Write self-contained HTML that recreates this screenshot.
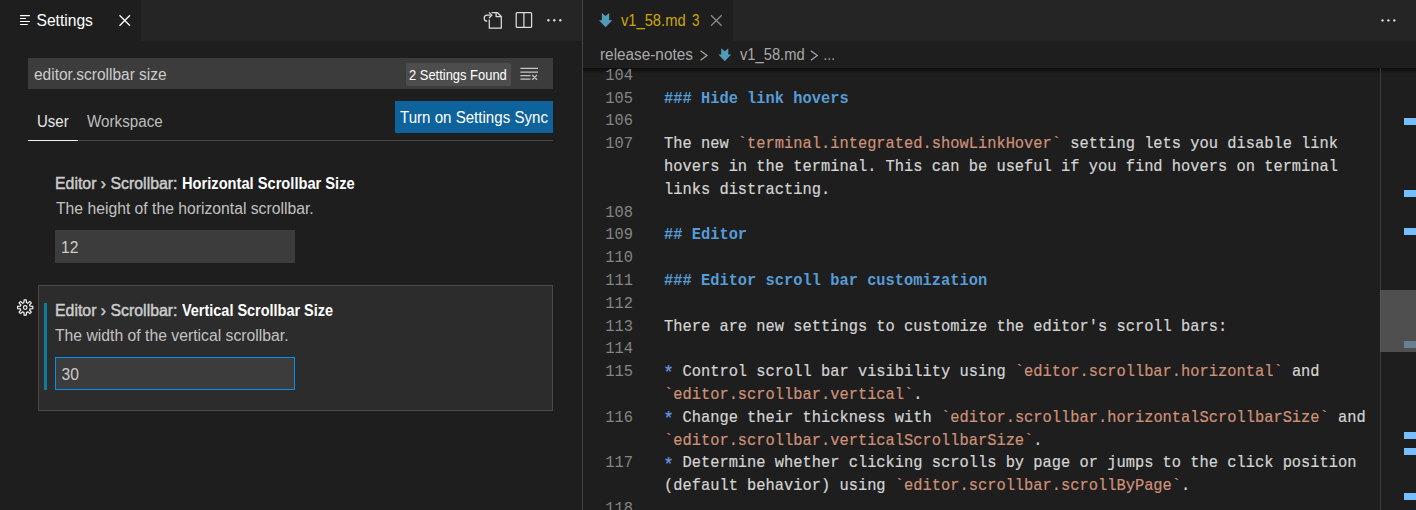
<!DOCTYPE html>
<html><head><meta charset="utf-8">
<style>
html,body{margin:0;padding:0}
body{width:1416px;height:510px;overflow:hidden;background:#1e1e1e;position:relative;font-family:'Liberation Sans',sans-serif}
.a{position:absolute}
.t{position:absolute;white-space:pre;line-height:normal;font-family:'Liberation Sans',sans-serif;transform-origin:0 0}
.ln{position:absolute;left:596px;width:37px;text-align:right;transform-origin:100% 0;white-space:pre;font-family:'Liberation Mono',monospace;font-size:15.4px;line-height:normal;color:#858585}
.cl{position:absolute;left:663.5px;transform-origin:0 0;white-space:pre;font-family:"Liberation Mono",monospace;font-size:15.4px;line-height:normal;color:#d4d4d4;-webkit-text-stroke:0.2px currentColor}
.mk{position:absolute;left:1404px;width:12px;height:7px;background:#75beff}
svg{position:absolute;overflow:visible}
</style></head><body>
<!-- LEFT GROUP -->
<div class="a" style="left:0;top:0;width:582px;height:41px;background:#252526"></div>
<div class="a" style="left:0;top:0;width:141px;height:41px;background:#1e1e1e"></div>
<!-- divider -->
<div class="a" style="left:582px;top:0;width:1px;height:510px;background:#444444"></div>
<!-- RIGHT GROUP tab bar -->
<div class="a" style="left:583px;top:0;width:833px;height:41px;background:#252526"></div>
<div class="a" style="left:583px;top:0;width:150px;height:41px;background:#1e1e1e"></div>
<!-- search box -->
<div class="a" style="left:28px;top:58px;width:525px;height:31px;background:#3c3c3c"></div>
<div class="a" style="left:406px;top:63px;width:105px;height:23px;background:#4d4d4d;border-radius:2px"></div>
<!-- sync button -->
<div class="a" style="left:395px;top:101px;width:158px;height:32px;background:#0e639c"></div>
<!-- tabs line -->
<div class="a" style="left:28px;top:140px;width:525px;height:1px;background:#454545"></div>
<div class="a" style="left:28px;top:139.5px;width:50px;height:1.5px;background:#f2f2f2"></div>
<!-- input 1 -->
<div class="a" style="left:55px;top:230px;width:240px;height:33px;background:#3c3c3c"></div>
<!-- focused row -->
<div class="a" style="left:38px;top:285px;width:515px;height:126px;box-sizing:border-box;background:#2c2c2c;border:1px solid #4a4a4a"></div>
<div class="a" style="left:44px;top:303px;width:3px;height:87px;background:#0c7d9d"></div>
<div class="a" style="left:55px;top:357px;width:240px;height:33px;box-sizing:border-box;background:#3c3c3c;border:1px solid #0090f1"></div>
<!-- breadcrumb shadow -->
<div class="a" style="left:583px;top:68px;width:833px;height:6px;background:linear-gradient(rgba(0,0,0,0.55),rgba(0,0,0,0))"></div>
<!-- overview ruler -->
<div class="a" style="left:1380px;top:68px;width:1px;height:442px;background:#3b3b3b"></div>
<div class="mk" style="top:118px"></div>
<div class="mk" style="top:190px"></div>
<div class="mk" style="top:228px"></div>
<div class="mk" style="top:341px"></div>
<div class="mk" style="top:432px"></div>
<div class="mk" style="top:448px"></div>
<div class="mk" style="top:493px"></div>
<div class="a" style="left:1380px;top:290px;width:36px;height:62px;background:rgba(100,100,100,0.7)"></div>

<!-- ICONS -->
<svg style="left:0;top:0" width="1416" height="510" viewBox="0 0 1416 510">
 <g stroke="#ffffff" stroke-width="1.2" fill="none">
  <!-- settings tab icon -->
  <path d="M20,15.6H29.9M20,18.5H26M20,21.5H29.9M20,24.5H27.7"/>
  <!-- close x -->
  <path d="M119.5,15.2L130,25.7M130,15.2L119.5,25.7" stroke-width="1.3"/>
 </g>
 <g stroke="#dcdcdc" stroke-width="1.25" fill="none" stroke-linejoin="round">
  <!-- go to file -->
  <path d="M491.6,12.5H497.3L501.3,16.5V28.2H489.3V19.5"/>
  <path d="M496.1,12.5V16.5H501.3"/>
  <path d="M490.5,15.2H487.2A3,3 0 0 0 487.2,21.2"/>
  <path d="M489,12.4L491.8,15.2L489,18"/>
  <!-- split -->
  <rect x="516.2" y="12.6" width="15.4" height="14.8" rx="1"/>
  <path d="M523.9,12.6V27.4"/>
  <!-- clear filter -->
  <path d="M520.4,68.4H538M520.4,72H538M520.4,75.6H530.5M520.4,79.2H530.5M532.2,75L537,79.7M537,75L532.2,79.7" stroke="#c5c5c5"/>
 </g>
 <g fill="#dcdcdc">
  <circle cx="548.4" cy="20.3" r="1.2"/><circle cx="554.3" cy="20.3" r="1.2"/><circle cx="560.3" cy="20.3" r="1.2"/>
  <circle cx="1382.5" cy="20.4" r="1.2"/><circle cx="1388.4" cy="20.4" r="1.2"/><circle cx="1394.3" cy="20.4" r="1.2"/>
 </g>
 <!-- gear -->
 <path d="M23.29,302.88 L23.91,302.67 L24.13,299.87 L26.27,299.87 L26.49,302.67 L27.11,302.88 L27.70,303.17 L29.83,301.35 L31.35,302.87 L29.53,305.00 L29.82,305.59 L30.03,306.21 L32.83,306.43 L32.83,308.57 L30.03,308.79 L29.82,309.41 L29.53,310.00 L31.35,312.13 L29.83,313.65 L27.70,311.83 L27.11,312.12 L26.49,312.33 L26.27,315.13 L24.13,315.13 L23.91,312.33 L23.29,312.12 L22.70,311.83 L20.57,313.65 L19.05,312.13 L20.87,310.00 L20.58,309.41 L20.37,308.79 L17.57,308.57 L17.57,306.43 L20.37,306.21 L20.58,305.59 L20.87,305.00 L19.05,302.87 L20.57,301.35 L22.70,303.17Z" fill="none" stroke="#f0f0f0" stroke-width="1.2" stroke-linejoin="round"/>
 <circle cx="25.2" cy="307.5" r="1.8" fill="none" stroke="#f0f0f0" stroke-width="1.2"/>
 <!-- markdown arrows -->
 <path d="M601.8,13L605.5,16L609.2,13V20.2H612.3L605.6,27.2L598.9,20.2H601.8Z" fill="#519aba"/>
 <path d="M721.2,48.3L724.8,51.2L728.3,48.3V54.6H731.2L724.8,61.2L718.4,54.6H721.2Z" fill="#519aba"/>
 <!-- right close x -->
 <path d="M711,15.2L721.7,25.7M721.7,15.2L711,25.7" stroke="#8b8b8b" stroke-width="1.3" fill="none"/>
 <!-- breadcrumb chevrons -->
 <path d="M700.5,50.8L707,55.5L700.5,60.2M810.8,50.8L817.3,55.5L810.8,60.2" stroke="#a9a9a9" stroke-width="1.2" fill="none"/>
</svg>

<div class="t" style="left:36.50px;top:12.10px;font-size:15.6px;font-weight:normal;color:#ffffff;">Settings</div>
<div class="t" style="left:33.80px;top:65.60px;font-size:15.6px;font-weight:normal;color:#cccccc;transform:scaleX(0.9940);">editor.scrollbar size</div>
<div class="t" style="left:409.40px;top:67.70px;font-size:13.8px;font-weight:normal;color:#ffffff;transform:scaleX(0.9375);">2 Settings Found</div>
<div class="t" style="left:400.20px;top:109.00px;font-size:15.6px;font-weight:normal;color:#ffffff;transform:scaleX(0.9680);">Turn on Settings Sync</div>
<div class="t" style="left:36.54px;top:112.70px;font-size:15.6px;font-weight:normal;color:#e7e7e7;transform:scaleX(0.9625);">User</div>
<div class="t" style="left:87.40px;top:112.90px;font-size:15.6px;font-weight:normal;color:#bdbdbd;transform:scaleX(0.9740);">Workspace</div>
<div class="t" style="left:54.78px;top:175.00px;font-size:15.6px;font-weight:normal;color:#cccccc;transform:scaleX(1.0168);-webkit-text-stroke:0.45px #cccccc;">Editor › Scrollbar:</div>
<div class="t" style="left:181.66px;top:175.00px;font-size:15.6px;font-weight:bold;color:#ffffff;transform:scaleX(0.9399);">Horizontal Scrollbar Size</div>
<div class="t" style="left:55.80px;top:200.40px;font-size:15.6px;font-weight:normal;color:#c2c2c2;transform:scaleX(1.0075);">The height of the horizontal scrollbar.</div>
<div class="t" style="left:61.10px;top:239.00px;font-size:15.6px;font-weight:normal;color:#cccccc;">12</div>
<div class="t" style="left:55.18px;top:302.30px;font-size:15.6px;font-weight:normal;color:#cccccc;transform:scaleX(1.0168);-webkit-text-stroke:0.45px #cccccc;">Editor › Scrollbar:</div>
<div class="t" style="left:182.30px;top:302.30px;font-size:15.6px;font-weight:bold;color:#ffffff;transform:scaleX(0.9264);">Vertical Scrollbar Size</div>
<div class="t" style="left:55.30px;top:327.40px;font-size:15.6px;font-weight:normal;color:#c2c2c2;transform:scaleX(1.0091);">The width of the vertical scrollbar.</div>
<div class="t" style="left:61.60px;top:366.00px;font-size:15.6px;font-weight:normal;color:#cccccc;">30</div>
<div class="t" style="left:620.70px;top:12.20px;font-size:15.6px;font-weight:normal;color:#cca700;transform:scaleX(0.9426);">v1_58.md</div>
<div class="t" style="left:691.70px;top:12.20px;font-size:15.6px;font-weight:normal;color:#cca700;transform:scaleX(0.8625);">3</div>
<div class="t" style="left:600.42px;top:46.20px;font-size:15.6px;font-weight:normal;color:#a9a9a9;transform:scaleX(0.9828);">release-notes</div>
<div class="t" style="left:739.70px;top:46.20px;font-size:15.6px;font-weight:normal;color:#a9a9a9;transform:scaleX(0.9441);">v1_58.md</div>
<div class="t" style="left:823.12px;top:46.20px;font-size:15.6px;font-weight:normal;color:#a9a9a9;transform:scaleX(0.7917);">…</div>
<div class="ln" style="top:66.80px;font-size:16.2px;transform:scaleX(0.9505)">104</div>
<div class="ln" style="top:89.60px;font-size:16.2px;transform:scaleX(0.9505)">105</div>
<div class="cl" style="top:89.60px;font-size:16.2px;transform:scaleX(0.9505)"><span style="color:#569cd6;font-weight:bold;-webkit-text-stroke:0">### Hide link hovers</span></div>
<div class="ln" style="top:112.40px;font-size:16.2px;transform:scaleX(0.9505)">106</div>
<div class="ln" style="top:135.20px;font-size:16.2px;transform:scaleX(0.9505)">107</div>
<div class="cl" style="top:135.20px;font-size:16.2px;transform:scaleX(0.9505)"><span style="color:#d4d4d4">The new </span><span style="color:#ce9178">`terminal.integrated.showLinkHover`</span><span style="color:#d4d4d4"> setting lets you disable link</span></div>
<div class="cl" style="top:158.00px;font-size:16.2px;transform:scaleX(0.9505)"><span style="color:#d4d4d4">hovers in the terminal. This can be useful if you find hovers on terminal</span></div>
<div class="cl" style="top:180.80px;font-size:16.2px;transform:scaleX(0.9505)"><span style="color:#d4d4d4">links distracting.</span></div>
<div class="ln" style="top:203.60px;font-size:16.2px;transform:scaleX(0.9505)">108</div>
<div class="ln" style="top:226.40px;font-size:16.2px;transform:scaleX(0.9505)">109</div>
<div class="cl" style="top:226.40px;font-size:16.2px;transform:scaleX(0.9505)"><span style="color:#569cd6;font-weight:bold;-webkit-text-stroke:0">## Editor</span></div>
<div class="ln" style="top:249.20px;font-size:16.2px;transform:scaleX(0.9505)">110</div>
<div class="ln" style="top:272.00px;font-size:16.2px;transform:scaleX(0.9505)">111</div>
<div class="cl" style="top:272.00px;font-size:16.2px;transform:scaleX(0.9505)"><span style="color:#569cd6;font-weight:bold;-webkit-text-stroke:0">### Editor scroll bar customization</span></div>
<div class="ln" style="top:294.80px;font-size:16.2px;transform:scaleX(0.9505)">112</div>
<div class="ln" style="top:317.60px;font-size:16.2px;transform:scaleX(0.9505)">113</div>
<div class="cl" style="top:317.60px;font-size:16.2px;transform:scaleX(0.9505)"><span style="color:#d4d4d4">There are new settings to customize the editor's scroll bars:</span></div>
<div class="ln" style="top:340.40px;font-size:16.2px;transform:scaleX(0.9505)">114</div>
<div class="ln" style="top:363.20px;font-size:16.2px;transform:scaleX(0.9505)">115</div>
<div class="cl" style="top:363.20px;font-size:16.2px;transform:scaleX(0.9505)"><span style="color:#6796e6;display:inline-block;width:9.722px;position:relative"><span style="position:absolute;left:-0.5px;top:1.2px;transform:scale(1.15)">*</span>&#8203;</span><span style="color:#d4d4d4"> Control scroll bar visibility using </span><span style="color:#ce9178">`editor.scrollbar.horizontal`</span><span style="color:#d4d4d4"> and</span></div>
<div class="cl" style="top:386.00px;font-size:16.2px;transform:scaleX(0.9505)"><span style="color:#ce9178">`editor.scrollbar.vertical`</span><span style="color:#d4d4d4">.</span></div>
<div class="ln" style="top:408.80px;font-size:16.2px;transform:scaleX(0.9505)">116</div>
<div class="cl" style="top:408.80px;font-size:16.2px;transform:scaleX(0.9505)"><span style="color:#6796e6;display:inline-block;width:9.722px;position:relative"><span style="position:absolute;left:-0.5px;top:1.2px;transform:scale(1.15)">*</span>&#8203;</span><span style="color:#d4d4d4"> Change their thickness with </span><span style="color:#ce9178">`editor.scrollbar.horizontalScrollbarSize`</span><span style="color:#d4d4d4"> and</span></div>
<div class="cl" style="top:431.60px;font-size:16.2px;transform:scaleX(0.9505)"><span style="color:#ce9178">`editor.scrollbar.verticalScrollbarSize`</span><span style="color:#d4d4d4">.</span></div>
<div class="ln" style="top:454.40px;font-size:16.2px;transform:scaleX(0.9505)">117</div>
<div class="cl" style="top:454.40px;font-size:16.2px;transform:scaleX(0.9505)"><span style="color:#6796e6;display:inline-block;width:9.722px;position:relative"><span style="position:absolute;left:-0.5px;top:1.2px;transform:scale(1.15)">*</span>&#8203;</span><span style="color:#d4d4d4"> Determine whether clicking scrolls by page or jumps to the click position</span></div>
<div class="cl" style="top:477.20px;font-size:16.2px;transform:scaleX(0.9505)"><span style="color:#d4d4d4">(default behavior) using </span><span style="color:#ce9178">`editor.scrollbar.scrollByPage`</span><span style="color:#d4d4d4">.</span></div>
<div class="ln" style="top:500.00px;font-size:16.2px;transform:scaleX(0.9505)">118</div>
</body></html>
